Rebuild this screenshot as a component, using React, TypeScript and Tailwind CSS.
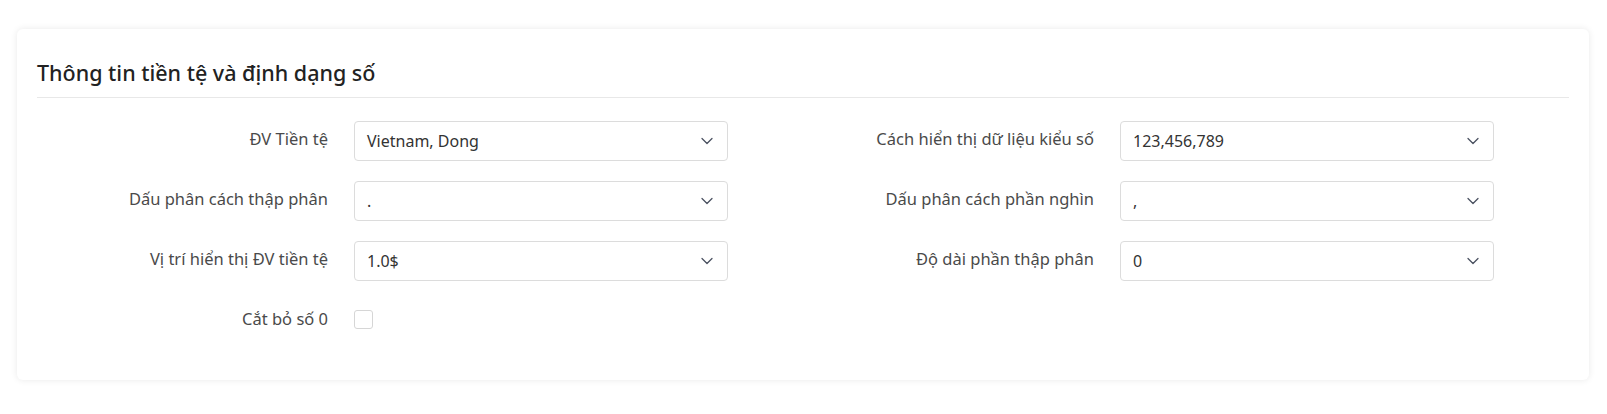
import { ChevronDown } from "lucide-react";

const font = { fontFamily: '"Noto Sans", "Open Sans", sans-serif' };

function Select({ value }: { value: string }) {
  return (
    <div className="ml-[26px] flex h-[40px] w-[374px] items-center justify-between rounded-[4px] border border-[#dcdcdc] bg-white pl-[12px] pr-[10px]">
      <span className="text-[16px] text-[#333]">{value}</span>
      <ChevronDown className="h-[20px] w-[20px] text-[#4a5160]" strokeWidth={1.5} />
    </div>
  );
}

function Field({ label, children }: { label: string; children: React.ReactNode }) {
  return (
    <div className="flex h-[40px] items-center">
      <label className="-mt-[3px] w-[291px] text-right text-[16.5px] text-[#4a4a4a]">{label}</label>
      {children}
    </div>
  );
}

export default function App() {
  return (
    <div className="min-h-screen bg-white pt-[29px] pl-[17px]" style={font}>
      <div className="h-[351px] w-[1572px] rounded-[6px] bg-white px-[20px] shadow-[0_0_7px_rgba(0,0,0,0.09)]">
        <div className="border-b border-[#e8e8e8] pt-[29px] pb-[9px]">
          <h2 className="text-[21.5px] leading-[30px] font-medium text-[#222]">
            Thông tin tiền tệ và định dạng số
          </h2>
        </div>

        <div className="mt-[23px] grid grid-cols-2 gap-y-[20px]">
          <Field label="ĐV Tiền tệ">
            <Select value="Vietnam, Dong" />
          </Field>
          <Field label="Cách hiển thị dữ liệu kiểu số">
            <Select value="123,456,789" />
          </Field>
          <Field label="Dấu phân cách thập phân">
            <Select value="." />
          </Field>
          <Field label="Dấu phân cách phần nghìn">
            <Select value="," />
          </Field>
          <Field label="Vị trí hiển thị ĐV tiền tệ">
            <Select value="1.0$" />
          </Field>
          <Field label="Độ dài phần thập phân">
            <Select value="0" />
          </Field>
          <Field label="Cắt bỏ số 0">
            <div className="ml-[26px] -mt-[3px] h-[19px] w-[19px] rounded-[3px] border border-[#d6d6d6] bg-white" />
          </Field>
        </div>
      </div>
    </div>
  );
}
